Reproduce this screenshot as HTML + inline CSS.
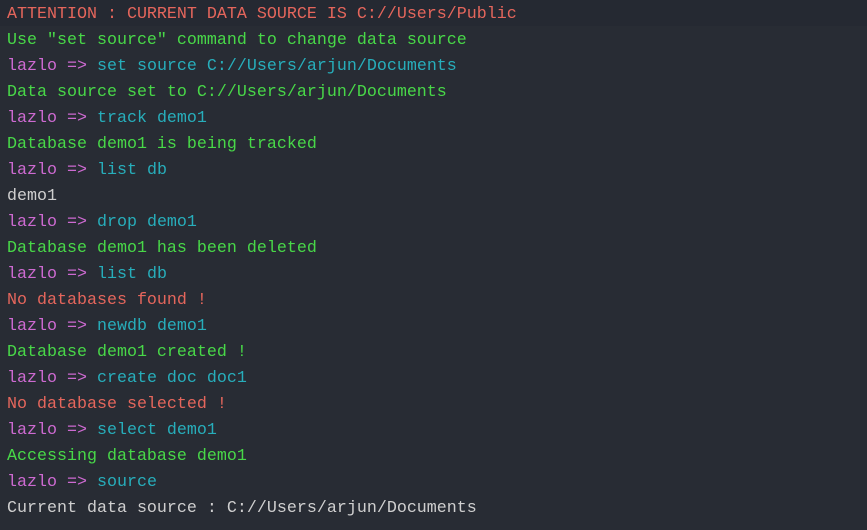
<!DOCTYPE html><html><head><style>
body{margin:0;width:867px;height:530px;background:#282c34;overflow:hidden;font-family:"Liberation Mono",monospace;font-size:16.67px;}
.l{height:26px;line-height:30px;padding-left:7px;white-space:pre;}
.first{background:#252932;}
.r{color:#e5665c}.g{color:#48d848}.p{color:#cd6ad1}.c{color:#27aebb}.w{color:#cfcfcf}
</style></head><body>
<div class="l first r">ATTENTION : CURRENT DATA SOURCE IS C://Users/Public</div>
<div class="l g">Use "set source" command to change data source</div>
<div class="l"><span class="p">lazlo =&gt; </span><span class="c">set source C://Users/arjun/Documents</span></div>
<div class="l g">Data source set to C://Users/arjun/Documents</div>
<div class="l"><span class="p">lazlo =&gt; </span><span class="c">track demo1</span></div>
<div class="l g">Database demo1 is being tracked</div>
<div class="l"><span class="p">lazlo =&gt; </span><span class="c">list db</span></div>
<div class="l w">demo1</div>
<div class="l"><span class="p">lazlo =&gt; </span><span class="c">drop demo1</span></div>
<div class="l g">Database demo1 has been deleted</div>
<div class="l"><span class="p">lazlo =&gt; </span><span class="c">list db</span></div>
<div class="l r">No databases found !</div>
<div class="l"><span class="p">lazlo =&gt; </span><span class="c">newdb demo1</span></div>
<div class="l g">Database demo1 created !</div>
<div class="l"><span class="p">lazlo =&gt; </span><span class="c">create doc doc1</span></div>
<div class="l r">No database selected !</div>
<div class="l"><span class="p">lazlo =&gt; </span><span class="c">select demo1</span></div>
<div class="l g">Accessing database demo1</div>
<div class="l"><span class="p">lazlo =&gt; </span><span class="c">source</span></div>
<div class="l w">Current data source : C://Users/arjun/Documents</div>
</body></html>
